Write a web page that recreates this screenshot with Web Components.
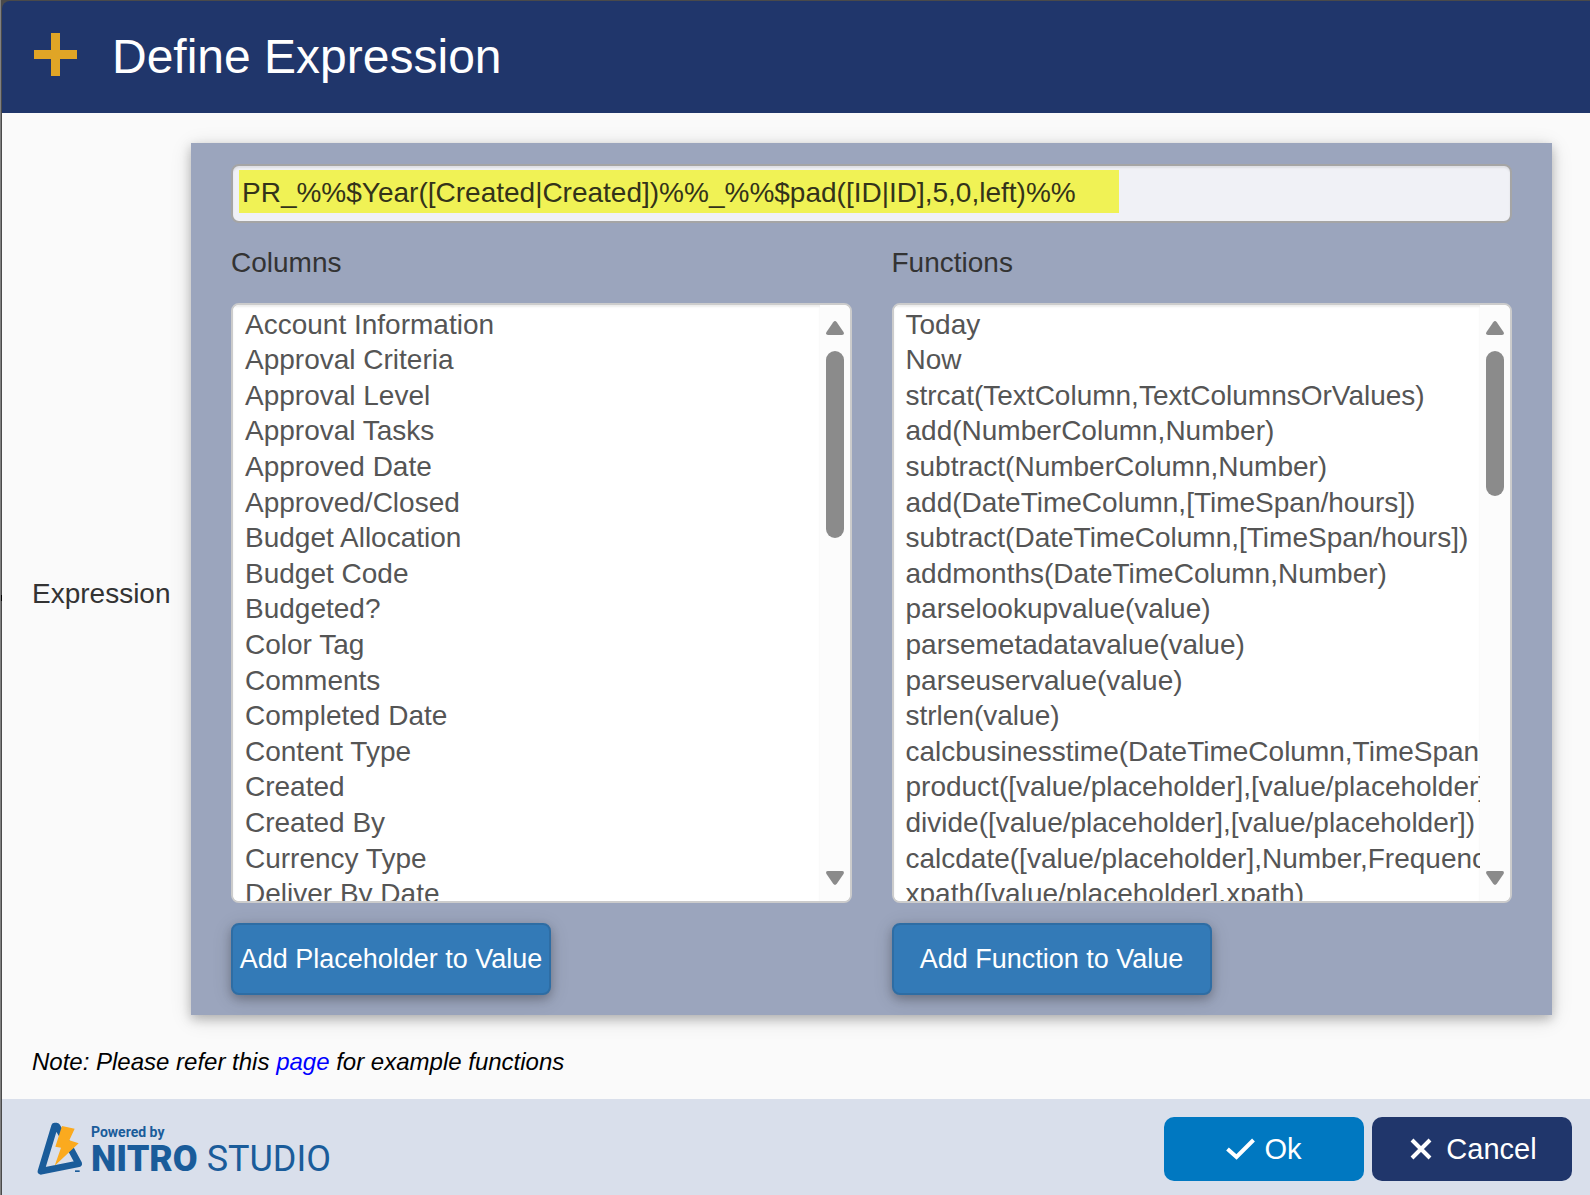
<!DOCTYPE html>
<html lang="en">
<head>
<meta charset="utf-8">
<title>Define Expression</title>
<style>
  html, body { height: 100%; margin: 0; }
  body { box-sizing: border-box; border-left: 1px solid #808080; background: #4a4a4a; font-family: "Liberation Sans", Arial, sans-serif; font-size: 28px; color: #333; }
</style>
</head>
<body>
<expression-dialog></expression-dialog>

<script>
const define = (name, html, setup) => {
  customElements.define(name, class extends HTMLElement {
    constructor() {
      super();
      this.attachShadow({ mode: "open" }).innerHTML = html;
    }
    connectedCallback() {
      if (setup && !this.ready) { this.ready = true; setup(this, this.shadowRoot); }
    }
  });
};

define("dialog-header", `
<style>
  :host { display: flex; align-items: center; gap: 35px; height: 112px; padding: 0 32px; background: #20366b; color: #fff; border-top-left-radius: 8px; box-sizing: border-box; }
  svg { width: 43px; height: 43px; margin-bottom: 6px; }
  h1 { margin: 0; font-size: 48px; line-height: 56px; font-weight: 400; }
</style>
<svg viewBox="0 0 43 43" aria-hidden="true"><path d="M17 0h9v17h17v9H26v17h-9V26H0v-9h17z" fill="#e0a526"/></svg>
<h1><slot></slot></h1>`);

define("item-list", `
<style>
  :host { display: flex; flex-direction: column; flex: 1 1 0; min-width: 0; align-items: flex-start; }
  label { line-height: 32px; margin-bottom: 24px; }
  .box { display: flex; align-self: stretch; height: 600px; box-sizing: border-box; border: 2px solid #ccc; border-radius: 8px; background: #fff; overflow: hidden; }
  select { flex: 1; min-width: 0; height: 100%; margin: 0; padding: 4px 0 0 12px; border: 0; outline: 0; overflow: hidden; background: #fff; color: #555; font: inherit; box-shadow: inset 0 2px 2px rgba(0,0,0,.075); border-radius: 0; box-sizing: border-box; scrollbar-width: none; }
  option { padding: 0 0 4px; min-height: 0; white-space: nowrap; }
  option:nth-child(5n+1), option:nth-child(5n+3) { padding-bottom: 3px; }
  .bar { flex: none; width: 30px; display: flex; flex-direction: column; align-items: center; padding: 16px 0; box-sizing: border-box; background: #fcfcfc; }
  .bar svg { width: 18px; height: 14px; fill: #8b8b8b; }
  .track { flex: 1; padding: 16px 0; }
  .thumb { width: 18px; height: var(--thumb); border-radius: 9px; background: #8b8b8b; }
  button { width: 320px; height: 72px; margin-top: 20px; padding: 0; font: inherit; font-size: 27px; color: #fff; background: #337ab7; border: 2px solid #2e6da4; border-radius: 8px; box-shadow: 0 4px 10px rgba(0,0,0,.22), 0 4px 20px rgba(0,0,0,.14); white-space: nowrap; }
</style>
<label for="list"></label>
<div class="box">
  <select id="list" size="17"></select>
  <div class="bar" aria-hidden="true">
    <svg viewBox="0 0 18 14"><path d="M7.2 1.2Q9-1 10.8 1.2L17.5 11Q18.800 14 16 14H2Q-.8 14 .5 11z"/></svg>
    <div class="track"><div class="thumb"></div></div>
    <svg viewBox="0 0 18 14"><path d="M7.2 12.800Q9 15 10.8 12.800L17.500 3Q18.800 0 16 0H2Q-.8 0 .5 3z"/></svg>
  </div>
</div>
<button type="button"></button>`, (host, root) => {
  root.querySelector("label").textContent = host.getAttribute("label");
  root.querySelector("button").textContent = host.getAttribute("action");
  root.querySelector("select").append(...host.querySelectorAll("option"));
});

define("expression-editor", `
<style>
  :host { display: block; flex: 1; min-width: 0; box-sizing: border-box; padding: 21px 40px 20px; background: #9ba5bd; box-shadow: 0 4px 10px rgba(0,0,0,.22), 0 4px 20px rgba(0,0,0,.14); }
  input { display: block; width: 100%; height: 59px; box-sizing: border-box; margin: 0 0 24px; padding: 0 9px 1px; border: 2px solid #a5a5a5; border-radius: 8px; outline: 0; font: inherit; color: #33331a;
    background: linear-gradient(#f0f255, #f0f255) 6px 4px / 880px 43px no-repeat padding-box, #f0f1f6; box-shadow: inset 0 2px 2px rgba(0,0,0,.075); }
  .lists { display: flex; gap: 40px; }
</style>
<input type="text" aria-label="Expression" value="PR_%%$Year([Created|Created])%%_%%$pad([ID|ID],5,0,left)%%">
<div class="lists"><slot></slot></div>`);

define("nitro-logo", `
<style>
  :host { display: flex; align-items: flex-start; gap: 6px; color: #1a5c9a; font-family: Roboto, sans-serif; }
  svg { width: 50px; height: 56px; }
  .text { display: flex; flex-direction: column; padding-top: 4px; }
  .by { font-size: 14px; line-height: 16px; font-weight: 700; }
  .name { font-size: 36px; line-height: 38px; font-weight: 400; white-space: pre; }
  b { font-weight: 900; }
</style>
<svg viewBox="105 90 150 168" aria-hidden="true">
  <path d="M164 108L123 244L236 221L214 180L170 108z" fill="none" stroke="#1a5c9a" stroke-width="20" stroke-linejoin="round"/>
  <path d="M186 108L224 116L208 151L236 160L164 227L183 173L166 170z" fill="#fbaa1e"/>
  <path d="M225 241h14v5h-14z" fill="#1a5c9a"/>
</svg>
<div class="text"><span class="by">Powered by</span><span class="name"><b>NITRO</b> STUDIO</span></div>`);

define("dialog-button", `
<style>
  :host { display: block; }
  button { display: flex; align-items: center; justify-content: center; gap: 9px; width: 200px; height: 64px; padding: 0; border: 0; border-radius: 10px; color: #fff; background: var(--fill); font: inherit; font-size: 29px; }
</style>
<button type="button"><slot name="icon"></slot><slot></slot></button>`);

define("expression-dialog", `
<style>
  :host { display: flex; flex-direction: column; position: relative; min-height: 100%; box-sizing: border-box; border: solid #4a4a4a; border-width: 1px 0 0 1px; }
  :host::before { content: ""; position: absolute; left: -2px; top: 50%; width: 1px; height: 4px; border: 1px solid #000; border-left: 0; background: #fff; transform: translateY(-50%); }
  main { flex: 1; background: #fafafa; padding: 30px 38px 0 30px; }
  .row { display: flex; align-items: center; gap: 20px; }
  .row > span { width: 139px; padding-top: 30px; }
  p { margin: 33px 0 0; font-size: 24px; line-height: 28px; font-style: italic; color: #000; }
  a { color: #00f; text-decoration: none; }
  footer { display: flex; justify-content: space-between; align-items: flex-start; padding: 18px 18px 14px 33px; background: #d9dfeb; }
  .actions { display: flex; gap: 8px; }
  nitro-logo { padding-top: 3px; }
  .ok { --fill: #0078c1; }
  .cancel { --fill: #20366b; }
</style>
<dialog-header>Define Expression</dialog-header>
<main>
  <div class="row">
    <span>Expression</span>
    <expression-editor>
      <item-list label="Columns" action="Add Placeholder to Value" style="--thumb: 187px">
        <option>Account Information</option><option>Approval Criteria</option><option>Approval Level</option><option>Approval Tasks</option><option>Approved Date</option><option>Approved/Closed</option><option>Budget Allocation</option><option>Budget Code</option><option>Budgeted?</option><option>Color Tag</option><option>Comments</option><option>Completed Date</option><option>Content Type</option><option>Created</option><option>Created By</option><option>Currency Type</option><option>Deliver By Date</option>
      </item-list>
      <item-list label="Functions" action="Add Function to Value" style="--thumb: 145px">
        <option>Today</option><option>Now</option><option>strcat(TextColumn,TextColumnsOrValues)</option><option>add(NumberColumn,Number)</option><option>subtract(NumberColumn,Number)</option><option>add(DateTimeColumn,[TimeSpan/hours])</option><option>subtract(DateTimeColumn,[TimeSpan/hours])</option><option>addmonths(DateTimeColumn,Number)</option><option>parselookupvalue(value)</option><option>parsemetadatavalue(value)</option><option>parseuservalue(value)</option><option>strlen(value)</option><option>calcbusinesstime(DateTimeColumn,TimeSpan</option><option>product([value/placeholder],[value/placeholder])</option><option>divide([value/placeholder],[value/placeholder])</option><option>calcdate([value/placeholder],Number,Frequency)</option><option>xpath([value/placeholder],xpath)</option>
      </item-list>
    </expression-editor>
  </div>
  <p>Note: Please refer this <a href="#">page</a> for example functions</p>
</main>
<footer>
  <nitro-logo></nitro-logo>
  <div class="actions">
    <dialog-button class="ok"><svg slot="icon" width="29" height="22" viewBox="0 0 29 22" aria-hidden="true"><path d="M1.500 11L10.500 19L27.500 2" fill="none" stroke="#fff" stroke-width="4"/></svg>Ok</dialog-button>
    <dialog-button class="cancel"><svg slot="icon" width="30" height="22" viewBox="-3 0 30 22" aria-hidden="true"><path d="M2 2L20 20M20 2L2 20" fill="none" stroke="#fff" stroke-width="4"/></svg>Cancel</dialog-button>
  </div>
</footer>`);
</script>
</body>
</html>
